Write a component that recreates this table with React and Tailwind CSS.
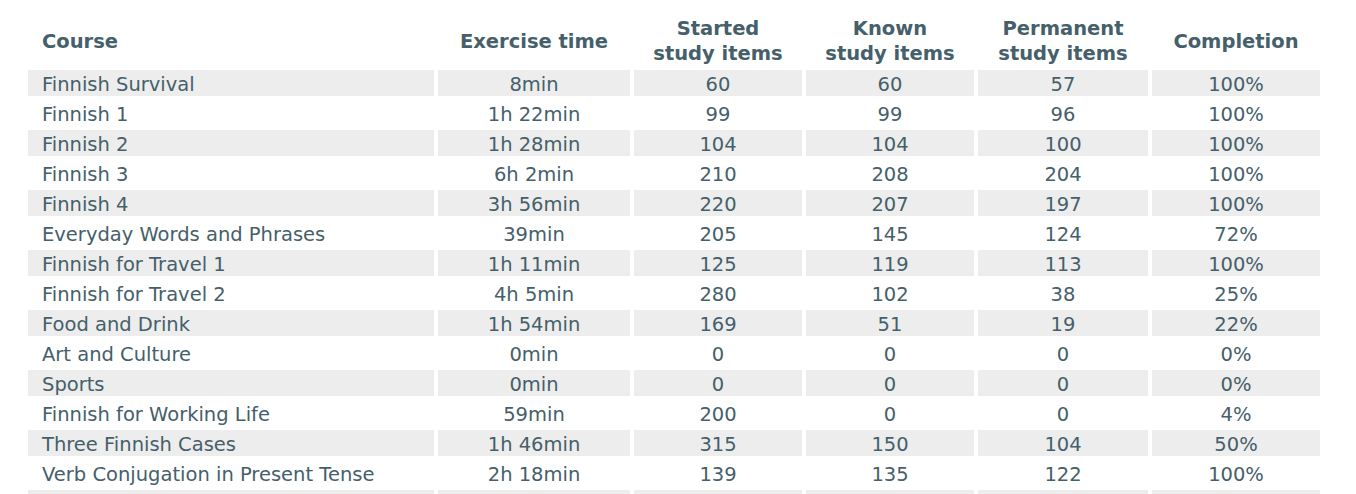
import React from 'react';

const courses = [
  ['Finnish Survival', '8min', 60, 60, 57, '100%'],
  ['Finnish 1', '1h 22min', 99, 99, 96, '100%'],
  ['Finnish 2', '1h 28min', 104, 104, 100, '100%'],
  ['Finnish 3', '6h 2min', 210, 208, 204, '100%'],
  ['Finnish 4', '3h 56min', 220, 207, 197, '100%'],
  ['Everyday Words and Phrases', '39min', 205, 145, 124, '72%'],
  ['Finnish for Travel 1', '1h 11min', 125, 119, 113, '100%'],
  ['Finnish for Travel 2', '4h 5min', 280, 102, 38, '25%'],
  ['Food and Drink', '1h 54min', 169, 51, 19, '22%'],
  ['Art and Culture', '0min', 0, 0, 0, '0%'],
  ['Sports', '0min', 0, 0, 0, '0%'],
  ['Finnish for Working Life', '59min', 200, 0, 0, '4%'],
  ['Three Finnish Cases', '1h 46min', 315, 150, 104, '50%'],
  ['Verb Conjugation in Present Tense', '2h 18min', 139, 135, 122, '100%'],
  // next row only peeks in at the bottom edge
  ['', '', '', '', '', ''],
];

const App = () => {
  return (
    <div className="min-h-screen bg-white text-[#45606a] font-['DejaVu_Sans',sans-serif]">
      <table className="ml-6 mt-3 w-[1300px] table-fixed border-separate border-spacing-1 text-[19.5px]">
        <thead>
          <tr className="h-[50px] font-bold leading-[25px]">
            <th className="w-[406px] pl-3.5 text-left align-middle">Course</th>
            <th className="w-[192px] text-center align-middle">Exercise time</th>
            <th className="w-[168px] text-center align-middle">Started<br />study items</th>
            <th className="w-[168px] text-center align-middle">Known<br />study items</th>
            <th className="w-[170px] text-center align-middle">Permanent<br />study items</th>
            <th className="w-[168px] text-center align-middle">Completion</th>
          </tr>
        </thead>
        <tbody className="leading-[23px]">
          {courses.map((row, i) => {
            const bg = i % 2 === 0 ? 'bg-[#ededed]' : 'bg-white';
            return (
              <tr key={i} className="h-[26px]">
                <td className={`${bg} whitespace-nowrap p-0 pt-[3px] pl-3.5 text-left`}>{row[0]}</td>
                {row.slice(1).map((cell, j) => (
                  <td key={j} className={`${bg} p-0 pt-[3px] text-center`}>{cell}</td>
                ))}
              </tr>
            );
          })}
        </tbody>
      </table>
    </div>
  );
};

export default App;
